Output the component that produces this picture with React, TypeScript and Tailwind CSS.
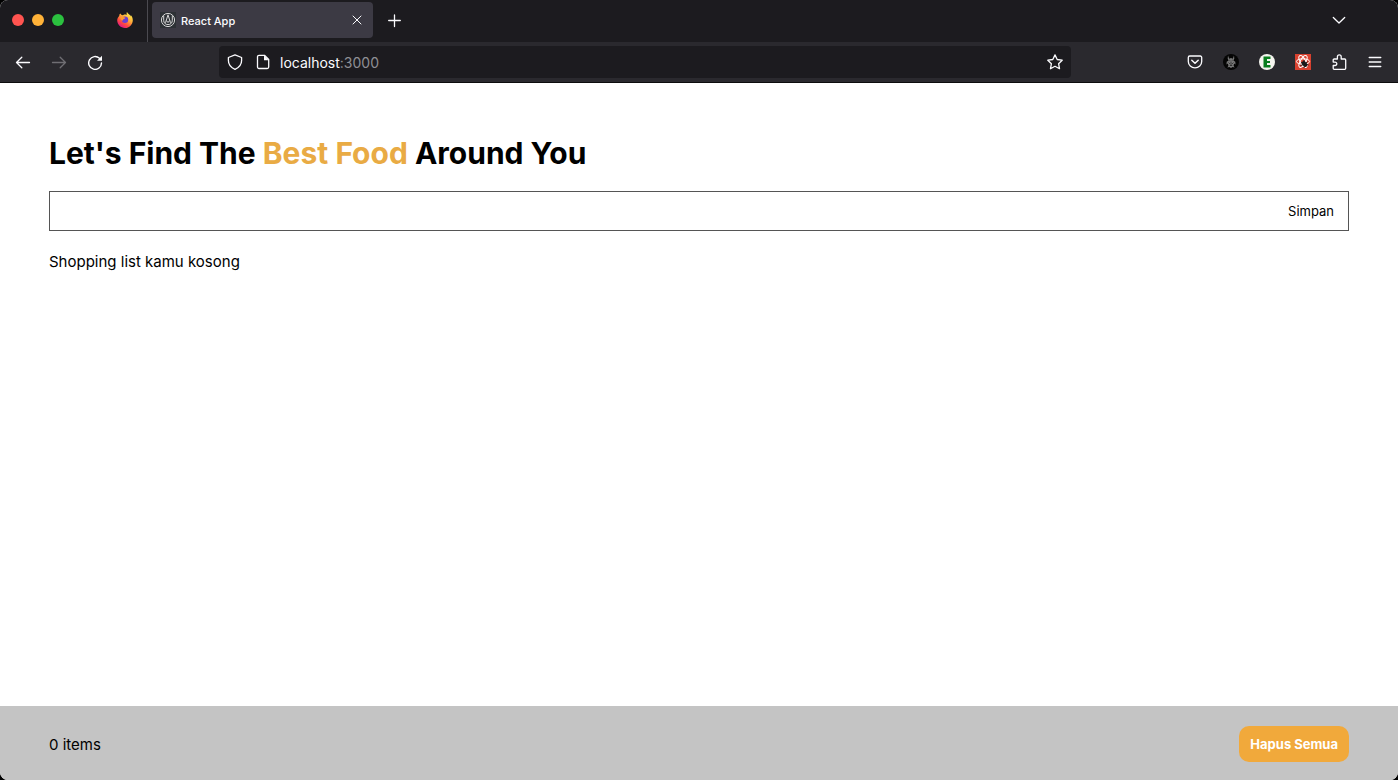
import { useState } from "react";
import type { FormEvent, ReactNode } from "react";

function Stroke({ children, className = "size-4" }: { children: ReactNode; className?: string }) {
  return (
    <svg viewBox="0 0 16 16" className={className} fill="none" stroke="currentColor" strokeWidth="1.3" strokeLinecap="round" strokeLinejoin="round" aria-hidden="true">
      {children}
    </svg>
  );
}

function ToolButton({ label, dim = false, children }: { label: string; dim?: boolean; children: ReactNode }) {
  return (
    <button type="button" aria-label={label} disabled={dim} className={`flex h-8 w-9 items-center justify-center ${dim ? "text-[#6f6e73]" : "text-[#fbfbfe]"}`}>
      {children}
    </button>
  );
}

function FirefoxLogo() {
  return (
    <svg viewBox="0 0 16 16" className="size-4" aria-hidden="true">
      <defs>
        <linearGradient id="flame" x1="0.85" y1="0.05" x2="0.25" y2="0.95">
          <stop offset="0" stopColor="#fff44f" />
          <stop offset="0.4" stopColor="#ffb03a" />
          <stop offset="0.72" stopColor="#ff4b3e" />
          <stop offset="1" stopColor="#e31587" />
        </linearGradient>
      </defs>
      <path fill="url(#flame)" d="M10 .1c-.6 1-.5 2 .1 2.900-1-.5-2-.6-3-.4L6 3.200 4.600 3 3.300 1.600C2.500 2.300 2.200 3.100 2.200 3.900 1 5 .2 6.600.2 8.300.2 12.600 3.700 16 8 16s7.800-3.500 7.800-7.800c0-2.300-.8-4.100-2.200-5.300.3.600.4 1 .4 1.500C13.200 2.600 10.700 2 10 .1z" />
      <circle cx="8" cy="7.800" r="3.200" fill="#6b3fd0" />
      <path fill="#ff9a2e" d="M3.300 5.200c1.200-.8 2.700-.6 3.700.1l1.300.3c.1.800-.6 1.200-1.500 1.400-.6.200-.9.800-.7 1.400C4.500 8.700 3.200 7.300 3.300 5.200z" />
    </svg>
  );
}

function SiteIcon() {
  return (
    <svg viewBox="0 0 16 16" className="size-4" fill="none" stroke="#d5d5d5" aria-hidden="true">
      <rect width="16" height="16" fill="#2d3135" stroke="none" />
      <circle cx="8" cy="8" r="6.600" />
      <path d="M3.700 3.500v4.800c0 2.600 1.600 4.300 4.300 4.300s4.300-1.700 4.300-4.300V3.500M5.500 10.800 8 2.800l2.500 8M6.300 8.500 8 10.500l1.700-2" />
    </svg>
  );
}

function BeastIcon() {
  return (
    <svg viewBox="0 0 16 16" className="size-4" aria-hidden="true">
      <circle cx="8" cy="8" r="8" fill="#050505" />
      <path fill="#777" d="m5 1.500 1.200 3.200L8 4l1.800.7L11 1.500l.3 3.300-.9 1.700 1.900 1.300.2 2.700-1.400-.9-.5 2.200 1 1.700-2-.4L8 14l-1.600-.9-2 .4 1-1.700-.5-2.200-1.400.9.200-2.700 1.900-1.300-.9-1.700z" />
      <path stroke="#202020" strokeWidth=".7" d="m6.300 6 1.200 1M9.700 6 8.500 7M5.500 8.500 7 10M10.500 8.500 9 10M8 8v4M6.800 11.500h2.400" />
    </svg>
  );
}

function ReactBugIcon() {
  return (
    <svg viewBox="0 0 16 16" className="size-4" aria-hidden="true">
      <rect width="16" height="16" fill="#d8412f" />
      <g fill="none" stroke="#fff" strokeWidth="1">
        <ellipse cx="8" cy="7.500" rx="6.600" ry="2.700" />
        <ellipse cx="8" cy="7.500" rx="6.600" ry="2.700" transform="rotate(60 8 7.500)" />
        <ellipse cx="8" cy="7.500" rx="6.600" ry="2.700" transform="rotate(120 8 7.500)" />
      </g>
      <ellipse cx="9.500" cy="10" rx="2.200" ry="3.200" fill="#191919" transform="rotate(-45 9.500 10)" />
      <path stroke="#191919" strokeWidth=".9" d="M6 8.500l3 1M5.500 11.500l3-1M9 14l.5-3M13.500 11l-3-1M12.500 7.500l-2 2M9 6v3" />
    </svg>
  );
}

function TabStrip() {
  return (
    <div className="flex h-[42px] items-center bg-[#1c1b1f]">
      <div className="flex w-[147px] items-center justify-between pl-3 pr-[14px] pb-0.5">
        <div className="flex gap-2">
          <button type="button" aria-label="Close window" className="size-3 rounded-full bg-[#ff5450]" />
          <button type="button" aria-label="Minimize window" className="size-3 rounded-full bg-[#ffb238]" />
          <button type="button" aria-label="Zoom window" className="size-3 rounded-full bg-[#2bc13f]" />
        </div>
        <FirefoxLogo />
      </div>
      <div className="h-full w-px bg-[#4b4a50]" />
      <div className="ml-1 mb-0.5 flex h-9 w-[221px] items-center rounded bg-[#3c3a44] pl-2 pr-2 text-[#fbfbfe]">
        <SiteIcon />
        <span className="ml-[5px] flex-1 pt-0.5 text-[11px] font-medium">React App</span>
        <button type="button" aria-label="Close tab">
          <Stroke><path strokeWidth="1" d="m4 4 8 8m0-8-8 8" /></Stroke>
        </button>
      </div>
      <button type="button" aria-label="New tab" className="ml-[13px] text-[#fbfbfe]">
        <Stroke><path d="M8.500 2v11.500M2.700 7.500h11.600" /></Stroke>
      </button>
      <button type="button" aria-label="List all tabs" className="ml-auto mr-[51px] text-[#fbfbfe]">
        <Stroke><path d="M2.300 4.500 8 10l5.700-5.500" /></Stroke>
      </button>
    </div>
  );
}

function Toolbar() {
  return (
    <div className="flex h-[41px] items-center border-b border-[#0c0c0d] bg-[#2a292e] px-[5px]">
      <ToolButton label="Back"><Stroke><path d="M14.500 8.500H1.500M6.800 3.200 1.500 8.500l5.300 5.300" /></Stroke></ToolButton>
      <ToolButton label="Forward" dim><Stroke><path d="M1.500 8.500h13M9.200 3.200l5.300 5.300-5.300 5.300" /></Stroke></ToolButton>
      <ToolButton label="Reload">
        <Stroke>
          <path d="M14.500 9A6.400 6.400 0 1 1 12.500 4.300" strokeWidth="1.400" />
          <path d="M15 1.800v5h-5z" fill="currentColor" stroke="none" />
        </Stroke>
      </ToolButton>
      <div className="mx-[106px] flex h-8 min-w-0 flex-1 items-center rounded bg-[#1c1b1f] px-2 text-[#fbfbfe]">
        <Stroke className="size-4 shrink-0"><path d="M8 .8 14.600 3.500v3c0 4-2.400 7-6.600 8.800-4.200-1.800-6.600-4.800-6.600-8.800v-3z" /></Stroke>
        <Stroke className="ml-3 size-4 shrink-0">
          <path d="M4 1.300h5.500l4.200 4.200V13a1.500 1.500 0 0 1-1.500 1.500H4A1.500 1.500 0 0 1 2.500 13V2.800A1.500 1.500 0 0 1 4 1.300z" />
          <path d="M9 1.300v5h4.700z" fill="currentColor" stroke="none" />
        </Stroke>
        <a href="#top" className="ml-[9px] flex-1 truncate pt-0.5 text-[14px] leading-5">localhost<span className="text-[#8f8f94]">:3000</span></a>
        <button type="button" aria-label="Bookmark this page">
          <Stroke><path d="m8 .9 2.200 4.600 5 .7-3.600 3.500.9 5L8 12.300l-4.500 2.400.9-5L.8 6.200l5-.7z" /></Stroke>
        </button>
      </div>
      <ToolButton label="Save to Pocket">
        <Stroke><path d="M2.800 2h10.400a1.500 1.500 0 0 1 1.500 1.500v4a6.700 6.400 0 0 1-13.400 0v-4A1.500 1.500 0 0 1 2.800 2z" /><path d="m4.800 6.300 3.200 3 3.200-3" strokeWidth="1.500" /></Stroke>
      </ToolButton>
      <ToolButton label="Dark extension"><BeastIcon /></ToolButton>
      <ToolButton label="E extension">
        <svg viewBox="0 0 16 16" className="size-4" aria-hidden="true">
          <circle cx="8" cy="8" r="8" fill="#f5f5ef" />
          <path fill="#087d1d" d="M4.500 2.500h7V5H8v2h3v2H8v2h3.500v2.500h-7z" />
        </svg>
      </ToolButton>
      <ToolButton label="React developer tools"><ReactBugIcon /></ToolButton>
      <ToolButton label="Extensions">
        <Stroke><path d="M2.200 7.500V6A1 1 0 0 1 3.200 5H6.400V2.800a1.900 1.900 0 0 1 3.800 0V5h3.500a1 1 0 0 1 1 1v8.300a1 1 0 0 1-1 1H3.200a1 1 0 0 1-1-1V11.500h1.900a1.700 1.700 0 0 0 0-3.400H2.200z" /></Stroke>
      </ToolButton>
      <ToolButton label="Menu"><Stroke><path d="M2.200 3.500h11.600M2.200 8h11.600M2.200 12.500h11.600" /></Stroke></ToolButton>
    </div>
  );
}

export default function App() {
  const [items, setItems] = useState<string[]>([]);
  const [draft, setDraft] = useState("");

  const save = (event: FormEvent) => {
    event.preventDefault();
    if (!draft.trim()) return;
    setItems([...items, draft.trim()]);
    setDraft("");
  };

  return (
    <div className="min-h-screen bg-black font-['Inter',sans-serif] text-black">
      <div className="flex min-h-screen flex-col overflow-hidden rounded-lg bg-white">
        <header>
          <TabStrip />
          <Toolbar />
        </header>
        <main id="top" className="flex-1 px-[49px] pt-[50px]">
          <h1 className="text-[30px] leading-10 font-bold">
            Let's Find The <span className="text-[#e9ab44]">Best Food</span> Around You
          </h1>
          <form onSubmit={save} className="mt-[18px] flex h-10 border border-[#555555]">
            <input aria-label="Item" value={draft} onChange={(event) => setDraft(event.target.value)} className="min-w-0 flex-1 px-3 outline-none" />
            <button type="submit" className="px-[14px] pt-0.5 text-[13px]">Simpan</button>
          </form>
          {items.length === 0 ? (
            <p className="mt-[19px] text-[15px] leading-6">Shopping list kamu kosong</p>
          ) : (
            <ul className="mt-[19px] text-[15px] leading-6">
              {items.map((item, index) => <li key={index}>{item}</li>)}
            </ul>
          )}
        </main>
        <footer className="flex items-center justify-between bg-[#c4c4c4] px-[49px] pt-5 pb-[18px]">
          <p className="pt-0.5 text-[15px] leading-6">{items.length} items</p>
          <button type="button" onClick={() => setItems([])} className="h-9 rounded-[10px] bg-[#f1a93b] px-[11px] pt-0.5 text-[13px] font-bold text-white">Hapus Semua</button>
        </footer>
      </div>
    </div>
  );
}
